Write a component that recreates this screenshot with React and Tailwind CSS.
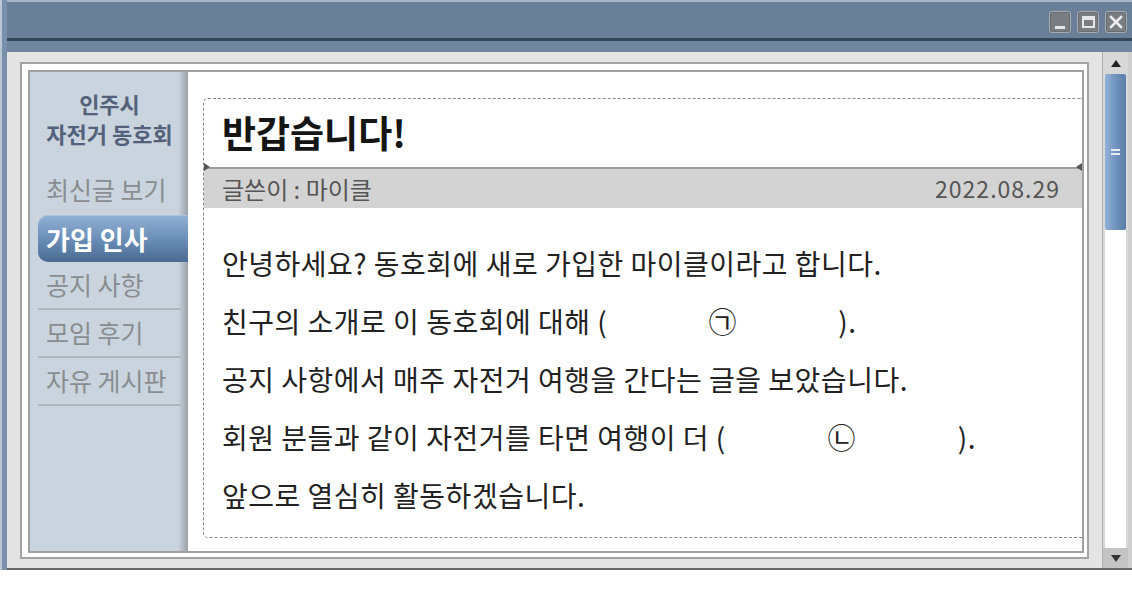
import React from "react";

const F = "font-['Noto_Sans_CJK_KR','Noto_Sans',sans-serif]";

function TitleButton({ children }) {
  return (
    <div className="flex h-[22px] w-[22px] items-center justify-center rounded-[3px] border border-[#a7abb0] bg-[#797c81] shadow-[inset_0_0_0_1px_#6a6d72]">
      {children}
    </div>
  );
}

function MenuRow({ label }) {
  return (
    <div className="mr-[7px] flex h-[48px] items-center border-b-2 border-[#adb5bd] pl-[8px] text-[25px] text-[#8a8d90]">
      {label}
    </div>
  );
}

export default function App() {
  return (
    <div className={`h-[592px] w-[1132px] overflow-hidden bg-white ${F}`}>
      <div className="flex h-[570px] w-[1132px]">
        {/* left window border */}
        <div className="w-[2px] bg-[#b9c7d5]" />
        <div className="w-[5px] bg-[#7890aa]" />
        <div className="flex flex-1 flex-col">
          <div className="h-[2px] bg-[#a9b8c8]" />
          <div className="flex h-[36px] items-start justify-end gap-[6px] bg-[#6a7f98] pr-[5px] pt-[9px]">
            <TitleButton>
              <div className="mt-[10px] h-[3px] w-[10px] bg-[#e6e6e6]" />
            </TitleButton>
            <TitleButton>
              <div className="h-[12px] w-[13px] border-2 border-t-[4px] border-[#e6e6e6]" />
            </TitleButton>
            <TitleButton>
              <svg width="14" height="14" viewBox="0 0 14 14">
                <path d="M2 2 L12 12 M12 2 L2 12" stroke="#ececec" strokeWidth="2.6" strokeLinecap="square" />
              </svg>
            </TitleButton>
          </div>
          <div className="h-[3px] bg-[#34475b]" />
          <div className="h-[11px] bg-[#6f86a0]" />
          {/* body */}
          <div className="flex h-[516px]">
            <div className="flex w-[1095px] bg-[#e4e4e4] pb-[9px] pl-[13px] pr-[13px] pt-[10px]">
              <div className="flex flex-1 border-2 border-[#a3a3a3] bg-white pb-[4px] pl-[6px] pr-[3px] pt-[6px]">
                <div className="flex flex-1 border-2 border-[#a0a0a0]">
                  {/* sidebar */}
                  <div className="relative flex w-[158px] flex-col bg-[#c9d4de]">
                    <div className="absolute right-0 top-0 h-full w-[9px] bg-gradient-to-r from-[#c6d0da] to-[#98a1aa]" />
                    <div className="relative flex flex-col pl-[8px] pt-[16px]">
                      <div className="mr-[7px] flex flex-col items-center text-[22px] font-bold leading-[30px] text-[#53627a]">
                        <span>인주시</span>
                        <span>자전거 동호회</span>
                      </div>
                      <div className="mr-[7px] mt-[18px] flex h-[47px] items-center pl-[8px] text-[25px] text-[#8a8d90]">
                        최신글 보기
                      </div>
                      <div className="mt-[2px] flex h-[47px] items-center rounded-l-[10px] bg-gradient-to-b from-[#92b2d4] via-[#6b8fb8] to-[#4a6b92] pl-[8px] text-[26px] font-bold text-white shadow-[inset_0_1px_0_#a9c3de]">
                        가입 인사
                      </div>
                      <MenuRow label="공지 사항" />
                      <MenuRow label="모임 후기" />
                      <MenuRow label="자유 게시판" />
                    </div>
                  </div>
                  {/* main */}
                  <div className="flex flex-1 flex-col pb-[13px] pl-[15px] pt-[26px]">
                    <div className="flex flex-1 flex-col rounded-l-[5px] border-b border-l border-t border-dashed border-[#8a8a8a]">
                      <div className="flex h-[68px] items-center pl-[18px] text-[37px] font-bold text-[#151515]">
                        반갑습니다!
                      </div>
                      <div className="relative flex h-[41px] items-center justify-between border-t-2 border-[#9c9c9c] bg-[#d3d3d3] pl-[18px] pr-[22px] text-[#555]">
                        <div className="absolute left-0 top-[-6px] h-0 w-0 border-y-[4px] border-l-[6px] border-y-transparent border-l-[#555]" />
                        <div className="absolute right-0 top-[-6px] h-0 w-0 border-y-[4px] border-r-[6px] border-y-transparent border-r-[#555]" />
                        <span className="text-[24px]">글쓴이 : 마이클</span>
                        <span className="text-[23px] tracking-[1px]">2022.08.29</span>
                      </div>
                      <div className="flex flex-col pl-[18px] pt-[26px] text-[28px] leading-[58px] tracking-[0.5px] text-[#222]">
                        <div>안녕하세요? 동호회에 새로 가입한 마이클이라고 합니다.</div>
                        <div className="flex">
                          <span>친구의 소개로 이 동호회에 대해 (</span>
                          <span className="inline-block w-[231px] text-center">㉠</span>
                          <span>).</span>
                        </div>
                        <div>공지 사항에서 매주 자전거 여행을 간다는 글을 보았습니다.</div>
                        <div className="flex">
                          <span>회원 분들과 같이 자전거를 타면 여행이 더 (</span>
                          <span className="inline-block w-[232px] text-center">㉡</span>
                          <span>).</span>
                        </div>
                        <div>앞으로 열심히 활동하겠습니다.</div>
                      </div>
                    </div>
                  </div>
                </div>
              </div>
            </div>
            {/* scrollbar */}
            <div className="flex w-[26px] flex-col border-l border-[#b0b0b0] bg-[#d8d8d8]">
              <div className="flex h-[22px] items-center justify-center">
                <div className="h-0 w-0 border-x-[5px] border-b-[7px] border-x-transparent border-b-[#222]" />
              </div>
              <div className="mx-[2px] flex h-[156px] items-center justify-center rounded-[2px] bg-gradient-to-r from-[#93b3d8] via-[#6f93bf] to-[#5a7ea8]">
                <div className="flex flex-col gap-[2px]">
                  <div className="h-[2px] w-[9px] bg-[#e8eef5]" />
                  <div className="h-[2px] w-[9px] bg-[#e8eef5]" />
                </div>
              </div>
              <div className="mx-[2px] flex-1 bg-white" />
              <div className="flex h-[20px] items-center justify-center bg-[#c4c4c4]">
                <div className="h-0 w-0 border-x-[5px] border-t-[7px] border-x-transparent border-t-[#333]" />
              </div>
            </div>
            <div className="w-[4px] bg-[#cfcfcf]" />
          </div>
        </div>
      </div>
      <div className="-mt-[2px] h-[2px] w-[1132px] bg-[#666]" />
    </div>
  );
}
